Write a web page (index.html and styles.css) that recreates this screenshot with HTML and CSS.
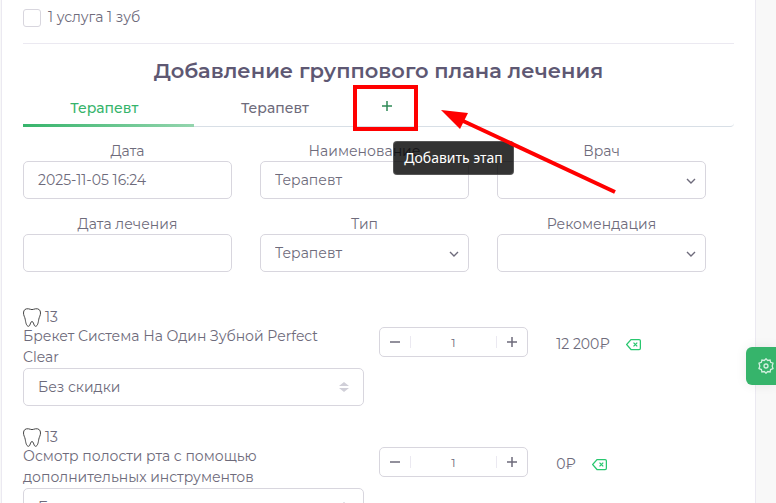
FILE: index.html
```
<!DOCTYPE html>
<html lang="ru">
<head>
    <meta charset="UTF-8">
    <meta name="viewport" content="width=device-width, initial-scale=1.0">
    <title>Групповой план лечения</title>
    <link rel="stylesheet" href="styles.css">
</head>
<body>
    <svg class="sprite" aria-hidden="true">
        <symbol id="tooth" viewBox="0 0 18 19">
            <path d="M5.500.8C2.500.4.500 1.800.500 5c0 2.500 1.300 4 1.700 6.200.5 2.800 1 7 3.300 7.100 2 .1 1.500-4.800 3.500-4.800s1.500 4.900 3.500 4.800c2.300-.1 2.800-4.300 3.300-7.100.4-2.200 1.700-3.700 1.700-6.200 0-3.200-2-4.600-5-4.200-1.500.2-2.200.8-3.500.8S7 1 5.500.8z"></path>
        </symbol>
        <symbol id="delete" viewBox="0 0 24 24">
            <path d="M21 4H8l-7 8 7 8h13a2 2 0 0 0 2-2V6a2 2 0 0 0-2-2z"></path>
            <path d="M18 9l-6 6M12 9l6 6"></path>
        </symbol>
        <symbol id="minus" viewBox="0 0 12 12"><path d="M1 6h10"></path></symbol>
        <symbol id="plus" viewBox="0 0 12 12"><path d="M1 6h10M6 1v10"></path></symbol>
    </svg>

    <main class="card">
        <label class="check">
            <input type="checkbox" class="check-input">
            <span>1 услуга 1 зуб</span>
        </label>

        <h1 class="title">Добавление группового плана лечения</h1>

        <div class="tabs">
            <button type="button" class="tab active">Терапевт</button>
            <button type="button" class="tab">Терапевт</button>
            <div class="tab-add">
                <button type="button" class="add-btn" aria-label="Добавить этап" aria-describedby="addTip">
                    <svg class="icon-add"><use href="#plus"></use></svg>
                </button>
                <div class="highlight"></div>
                <div class="tooltip" id="addTip" role="tooltip">Добавить этап</div>
                <svg class="arrow" viewBox="0 0 176 84" aria-hidden="true">
                    <path class="arrow-line" d="M20 10L174 82"></path>
                    <path class="arrow-head" d="M0 0L27 3L19 19z"></path>
                </svg>
            </div>
        </div>

        <form class="fields">
            <div class="field">
                <label for="date">Дата</label>
                <input type="text" id="date" class="control" value="2025-11-05 16:24">
            </div>
            <div class="field">
                <label for="name">Наименование</label>
                <input type="text" id="name" class="control" value="Терапевт">
            </div>
            <div class="field">
                <label for="doctor">Врач</label>
                <select id="doctor" class="control select"><option></option></select>
            </div>
            <div class="field">
                <label for="treatDate">Дата лечения</label>
                <input type="text" id="treatDate" class="control">
            </div>
            <div class="field">
                <label for="type">Тип</label>
                <select id="type" class="control select"><option>Терапевт</option></select>
            </div>
            <div class="field">
                <label for="advice">Рекомендация</label>
                <select id="advice" class="control select"><option></option></select>
            </div>
        </form>

        <section class="services">
            <div class="service">
                <div class="service-info">
                    <div class="tooth"><svg class="icon-tooth"><use href="#tooth"></use></svg>13</div>
                    <div class="service-name">Брекет Система На Один Зубной Perfect Clear</div>
                    <select class="control discount" aria-label="Скидка"><option>Без скидки</option></select>
                </div>
                <div class="counter">
                    <button type="button" class="step" aria-label="Меньше"><svg class="icon-step"><use href="#minus"></use></svg></button>
                    <input type="text" class="count" value="1" aria-label="Количество">
                    <button type="button" class="step" aria-label="Больше"><svg class="icon-step"><use href="#plus"></use></svg></button>
                </div>
                <div class="price">
                    <span>12 200₽</span>
                    <button type="button" class="remove" aria-label="Удалить"><svg class="icon-remove"><use href="#delete"></use></svg></button>
                </div>
            </div>
            <div class="service">
                <div class="service-info">
                    <div class="tooth"><svg class="icon-tooth"><use href="#tooth"></use></svg>13</div>
                    <div class="service-name">Осмотр полости рта с помощью дополнительных инструментов</div>
                    <select class="control discount" aria-label="Скидка"><option>Без скидки</option></select>
                </div>
                <div class="counter">
                    <button type="button" class="step" aria-label="Меньше"><svg class="icon-step"><use href="#minus"></use></svg></button>
                    <input type="text" class="count" value="1" aria-label="Количество">
                    <button type="button" class="step" aria-label="Больше"><svg class="icon-step"><use href="#plus"></use></svg></button>
                </div>
                <div class="price">
                    <span>0₽</span>
                    <button type="button" class="remove" aria-label="Удалить"><svg class="icon-remove"><use href="#delete"></use></svg></button>
                </div>
            </div>
        </section>
    </main>

    <button type="button" class="customizer" aria-label="Настройки">
        <svg class="icon-gear" viewBox="0 0 16 16">
            <path d="M8 .8l1.700 1.700 2.400-.5.500 2.300 2.400.9L14.200 8l.8 2.700-2.400.9-.5 2.400-2.400-.5L8 15.200l-1.700-1.700-2.400.5-.5-2.400-2.400-.9L1.800 8 1 5.200l2.400-.9.5-2.300 2.400.5z"></path>
            <circle cx="8" cy="8" r="2"></circle>
        </svg>
    </button>
</body>
</html>
```
FILE: styles.css
```
* {
  margin: 0;
  padding: 0;
  box-sizing: border-box;
}

body {
  font-family: 'Montserrat', 'Inter', sans-serif;
  font-size: 14px;
  line-height: 21px;
  color: #6e6b7b;
  background-color: #f8f8f8;
}

button, input, select {
  font: inherit;
  color: inherit;
}

button {
  border: none;
  background: none;
  cursor: pointer;
}

svg {
  display: block;
  fill: none;
  stroke: currentColor;
}

.sprite {
  position: absolute;
  width: 0;
  height: 0;
}

.card {
  min-height: 100vh;
  margin: 0 20px 0 1px;
  padding: 7px 21px 20px;
  background-color: #fff;
  border: solid #ebe9f1;
  border-width: 0 1px;
}

.check {
  display: flex;
  align-items: center;
  gap: 7px;
  height: 37px;
  padding-bottom: 15px;
  border-bottom: 1px solid #ebe9f1;
}

.check-input {
  appearance: none;
  width: 18px;
  height: 18px;
  background-color: #fff;
  border: 1px solid #d8d6de;
  border-radius: 3px;
}

.title {
  padding: 14px 0 6px;
  font-size: 21px;
  font-weight: 600;
  line-height: 26px;
  text-align: center;
  color: #5e5873;
}

.tabs {
  display: flex;
  height: 37px;
  border-bottom: 1px solid #d8dfe6;
  border-radius: 4px;
}

.tab {
  position: relative;
  flex: 0 0 24%;
  padding-right: 8px;
  font-weight: 500;
}

.tab.active {
  color: #36b46b;
}

.tab.active::after {
  content: '';
  position: absolute;
  left: 0;
  right: 0;
  bottom: -1px;
  height: 3px;
  background: linear-gradient(to right, #36b46b, #94d5ae);
}

.tab-add {
  position: relative;
}

.add-btn {
  padding: 10px 17px;
  color: #2f8a57;
}

.icon-add {
  width: 12px;
  height: 12px;
  stroke-width: 1.5;
}

.highlight {
  position: absolute;
  top: -5px;
  left: -11px;
  width: 65px;
  height: 46px;
  border: 4px solid #f00;
}

.tooltip {
  position: absolute;
  z-index: 1;
  top: 51px;
  left: 29px;
  padding: 6px 10px;
  font-family: 'Noto Sans', sans-serif;
  line-height: 20px;
  white-space: nowrap;
  color: #fff;
  background-color: rgba(0, 0, 0, 0.8);
  border: 1px solid rgba(120, 120, 120, 0.5);
  border-radius: 4px;
}

.arrow {
  position: absolute;
  z-index: 2;
  top: 20px;
  left: 77px;
  width: 176px;
  height: 84px;
}

.arrow-line {
  stroke: #f00;
  stroke-width: 4;
}

.arrow-head {
  fill: #f00;
  stroke: none;
}

.fields {
  display: grid;
  grid-template-columns: repeat(3, 1fr);
  gap: 15px 28px;
  padding: 14px 28px 0 0;
}

.field {
  display: flex;
  flex-direction: column;
  line-height: 20px;
  text-align: center;
}

.control {
  width: 100%;
  height: 38px;
  padding: 0 14px;
  background-color: #fff;
  border: 1px solid #d8d6de;
  border-radius: 5px;
  outline: none;
}

.control:focus {
  border-color: #36b46b;
}

.select, .discount {
  appearance: none;
  background-repeat: no-repeat;
  background-position: right 9px center;
}

.select {
  background-image: url("data:image/svg+xml,%3Csvg xmlns='http://www.w3.org/2000/svg' width='10' height='8' fill='none' stroke='%236e6b7b' stroke-width='1.4'%3E%3Cpath d='M1 3l4 4 4-4'/%3E%3C/svg%3E");
}

.discount {
  background-image: url("data:image/svg+xml,%3Csvg xmlns='http://www.w3.org/2000/svg' width='10' height='10' fill='%23d0cfd8'%3E%3Cpath d='M0 4l5-4 5 4zM0 6l5 4 5-4z'/%3E%3C/svg%3E");
  background-position: right 14px center;
}

.services {
  display: flex;
  flex-direction: column;
  gap: 20px;
  padding-top: 34px;
}

.service {
  display: grid;
  grid-template-columns: 50% 25% 25%;
  align-items: start;
}

.service-info {
  padding-right: 15px;
}

.service-name {
  padding-right: 14px;
}

.tooth {
  display: flex;
  align-items: center;
  gap: 4px;
  height: 20px;
  padding-top: 2px;
}

.icon-tooth {
  width: 18px;
  height: 19px;
  color: #444;
}

.counter {
  display: flex;
  align-items: center;
  height: 30px;
  margin: 21px 28px 0 0;
  border: 1px solid #d8d6de;
  border-radius: 5px;
}

.step {
  padding: 9px;
}

.icon-step {
  width: 12px;
  height: 12px;
  color: #6e6b7b;
  stroke-width: 1.5;
}

.count {
  flex: 1;
  min-width: 0;
  height: 12px;
  font-size: 12px;
  text-align: center;
  border: solid #ebe9f1;
  border-width: 0 1px;
  outline: none;
}

.price {
  display: flex;
  align-items: center;
  gap: 16px;
  padding-top: 28px;
}

.remove {
  color: #28c76f;
}

.icon-remove {
  width: 15px;
  height: 15px;
  stroke-width: 2;
}

.customizer {
  position: fixed;
  top: 347px;
  right: 0;
  padding: 11px 2px 11px 12px;
  color: #d3f0df;
  background-color: #36b46b;
  border-radius: 6px 0 0 6px;
  box-shadow: 0 0 12px rgba(0, 0, 0, 0.08);
}

.icon-gear {
  width: 16px;
  height: 16px;
  stroke-width: 1.3;
}
```
